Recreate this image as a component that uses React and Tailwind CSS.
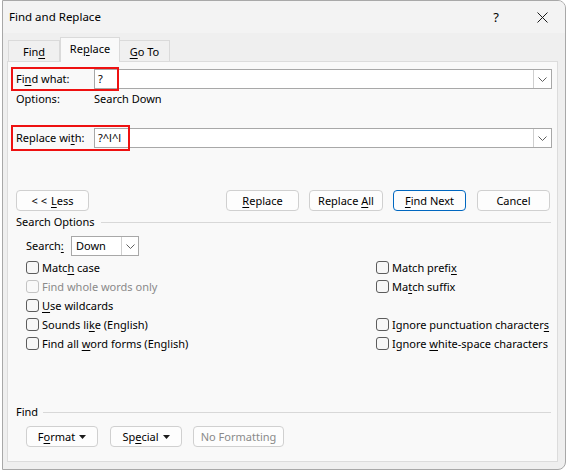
import React from "react";

const F = { fontFamily: '"Segoe UI", "Noto Sans", "Open Sans", sans-serif' };

function U({ children }) {
  return <span className="underline underline-offset-[2px] decoration-[1px]">{children}</span>;
}

function Chevron() {
  return (
    <svg width="9" height="5" viewBox="0 0 9 5" fill="none">
      <path d="M0.5 0.5 L4.5 4.5 L8.5 0.5" stroke="#5f5f5f" strokeWidth="1" />
    </svg>
  );
}

function Btn({ w, ml, children, primary, disabled }) {
  return (
    <div
      className={`flex items-center justify-center h-[21px] rounded-[4px] border bg-[#fdfdfd] whitespace-nowrap ${
        primary ? "border-[#0067c0]" : "border-[#d0d0d0]"
      } ${disabled ? "text-[#8a8a8a]" : "text-black"} ${w} ${ml}`}
    >
      {children}
    </div>
  );
}

function Check({ children, disabled }) {
  return (
    <div className="flex items-center h-[19px] whitespace-nowrap">
      <span
        className={`shrink-0 w-[13px] h-[13px] rounded-[3px] border ${
          disabled ? "border-[#c4c4c4] bg-[#f9f9f9]" : "border-[#5c5c5c] bg-[#f7f7f7]"
        }`}
      />
      <span className={`ml-[3px] ${disabled ? "text-[#8a8a8a]" : "text-black"}`}>{children}</span>
    </div>
  );
}

export default function App() {
  return (
    <div className="w-[568px] h-[471px] bg-white pl-[2px] text-[11px] leading-[16px] text-black" style={F}>
      <div className="w-[564px] h-[470px] border border-[#a8a8a8] rounded-tr-[8px] rounded-br-[8px] bg-[#efefef] overflow-hidden">
        {/* title bar */}
        <div className="h-[32px] flex items-center bg-[#f3f3f3] pl-[6px] relative">
          <span className="text-[11.5px]">Find and Replace</span>
          <span className="ml-auto mr-[38px] text-[13px]">?</span>
          <svg width="11" height="11" viewBox="0 0 11 11" className="mr-[17px]">
            <path d="M0.5 0.5 L10.5 10.5 M10.5 0.5 L0.5 10.5" stroke="#1a1a1a" strokeWidth="1" />
          </svg>
        </div>
        {/* tabs */}
        <div className="flex items-end h-[28px] pl-[5px]">
          <div className="w-[52px] h-[21px] border border-b-0 border-[#dadada] bg-[#f0f0f0] flex items-center justify-center pt-[1px]">
            <span>Fin<U>d</U></span>
          </div>
          <div className="w-[60px] h-[25px] border border-b-0 border-[#dadada] bg-[#f9f9f9] flex items-center justify-center -mb-px relative z-10 pb-[2px]">
            <span>Re<U>p</U>lace</span>
          </div>
          <div className="w-[50px] h-[21px] border border-b-0 border-l-0 border-[#dadada] bg-[#f0f0f0] flex items-center justify-center pt-[1px]">
            <span><U>G</U>o To</span>
          </div>
        </div>
        {/* panel */}
        <div className="ml-[4px] w-[551px] h-[401px] border border-[#dcdcdc] bg-[#f9f9f9] flex flex-col">
          {/* find what */}
          <div className="relative flex items-center h-[24px] mt-[5px]">
            <span className="w-[86px] pl-[8px]">Fi<U>n</U>d what:</span>
            <div className="w-[458px] h-[20px] border border-[#a8a8a8] bg-white flex items-center">
              <span className="pl-[3px] flex-1">?</span>
              <div className="w-[18px] h-[18px] border-l border-[#cfcfcf] flex items-center justify-center">
                <Chevron />
              </div>
            </div>
            <div className="absolute left-[3px] top-0 w-[108px] h-[24px] border-2 border-[#ee1111]" />
          </div>
          {/* options */}
          <div className="flex items-center h-[16px]">
            <span className="w-[86px] pl-[8px]">Options:</span>
            <span>Search Down</span>
          </div>
          {/* replace with */}
          <div className="relative flex items-center h-[26px] mt-[18px]">
            <span className="w-[86px] pl-[8px]">Replace wi<U>t</U>h:</span>
            <div className="w-[458px] h-[20px] border border-[#a8a8a8] bg-white flex items-center">
              <span className="pl-[3px] flex-1">?^l^l</span>
              <div className="w-[18px] h-[18px] border-l border-[#cfcfcf] flex items-center justify-center">
                <Chevron />
              </div>
            </div>
            <div className="absolute left-[3px] top-0 w-[119px] h-[26px] border-2 border-[#ee1111]" />
          </div>
          {/* buttons */}
          <div className="flex items-center mt-[39px]">
            <Btn w="w-[73px]" ml="ml-[8px]">&lt; &lt; <span className="ml-[4px]"><U>L</U>ess</span></Btn>
            <Btn w="w-[73px]" ml="ml-[137px]"><span><U>R</U>eplace</span></Btn>
            <Btn w="w-[74px]" ml="ml-[10px]"><span>Replace <U>A</U>ll</span></Btn>
            <Btn w="w-[73px]" ml="ml-[10px]" primary><span><U>F</U>ind Next</span></Btn>
            <Btn w="w-[73px]" ml="ml-[11px]"><span>Cancel</span></Btn>
          </div>
          {/* search options header */}
          <div className="flex items-center h-[16px] mt-[3px] pl-[8px] pr-[6px]">
            <span>Search Options</span>
            <div className="flex-1 h-px bg-[#d8d8d8] ml-[6px]" />
          </div>
          {/* search select */}
          <div className="flex items-center mt-[6px] pl-[18px]">
            <span className="w-[45px]">Search<U>:</U></span>
            <div className="w-[68px] h-[20px] border border-[#a8a8a8] bg-white flex items-center">
              <span className="pl-[4px] flex-1">Down</span>
              <div className="w-[17px] h-[18px] border-l border-[#cfcfcf] flex items-center justify-center">
                <Chevron />
              </div>
            </div>
          </div>
          {/* checkboxes */}
          <div className="flex mt-[2px] pl-[18px]">
            <div className="w-[350px] flex flex-col">
              <Check>Matc<U>h</U> case</Check>
              <Check disabled>Find whole words only</Check>
              <Check><U>U</U>se wildcards</Check>
              <Check>Sounds li<U>k</U>e (English)</Check>
              <Check>Find all <U>w</U>ord forms (English)</Check>
            </div>
            <div className="flex flex-col">
              <Check>Match prefi<U>x</U></Check>
              <Check>Ma<U>t</U>ch suffix</Check>
              <div className="h-[19px]" />
              <Check>Ignore punctuation character<U>s</U></Check>
              <Check>Ignore <U>w</U>hite-space characters</Check>
            </div>
          </div>
          {/* find header */}
          <div className="flex items-center h-[16px] mt-[51px] pl-[8px] pr-[6px]">
            <span>Find</span>
            <div className="flex-1 h-px bg-[#d8d8d8] ml-[5px]" />
          </div>
          {/* bottom buttons */}
          <div className="flex items-center mt-[6px]">
            <Btn w="w-[72px]" ml="ml-[18px]">
              <span>F<U>o</U>rmat</span>
              <svg width="7" height="4" viewBox="0 0 7 4" className="ml-[4px]"><path d="M0 0 H7 L3.5 4 Z" fill="#1a1a1a" /></svg>
            </Btn>
            <Btn w="w-[72px]" ml="ml-[12px]">
              <span>Sp<U>e</U>cial</span>
              <svg width="7" height="4" viewBox="0 0 7 4" className="ml-[4px]"><path d="M0 0 H7 L3.5 4 Z" fill="#1a1a1a" /></svg>
            </Btn>
            <Btn w="w-[91px]" ml="ml-[11px]" disabled><span>No Formatting</span></Btn>
          </div>
        </div>
      </div>
    </div>
  );
}
